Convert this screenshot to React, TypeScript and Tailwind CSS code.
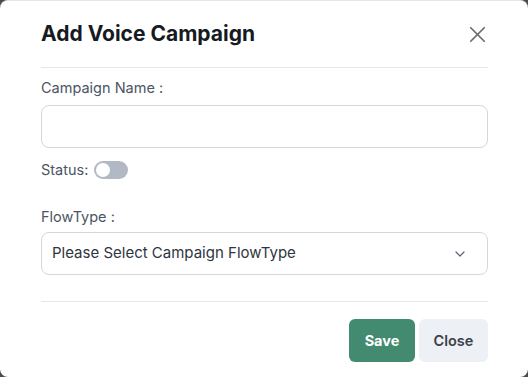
import { X, ChevronDown } from 'lucide-react';

export default function App() {
  return (
    <div className="h-[377px] w-[528px] bg-[#4b4b4b] font-['Inter',sans-serif]">
      <div className="flex h-full flex-col rounded-lg border-t border-[#e3e8f0] bg-white pl-[41px] pr-[40px]">
        <div className="flex items-center justify-between pt-[19px] pb-[19px]">
          <h2 className="text-[21px] font-bold leading-7 text-[#161a22]">Add Voice Campaign</h2>
          <button className="-mr-[3px] text-[#6b6b6b]">
            <X className="h-[27px] w-[27px]" strokeWidth={1.5} />
          </button>
        </div>
        <div className="h-px bg-[#e5e7eb]" />

        <label className="mt-[10px] text-[14.5px] leading-5 text-[#4b5563]">Campaign Name :</label>
        <input className="mt-[7px] h-[43px] w-full rounded-lg border border-[#d4d7dd] px-3 text-sm outline-none" />

        <div className="mt-[12px] flex items-center gap-[6px]">
          <span className="text-[14.5px] leading-5 text-[#4b5563]">Status:</span>
          <span className="flex h-[18px] w-[34px] items-center rounded-full bg-[#b3b9c4] px-[2px]">
            <span className="h-[14px] w-[14px] rounded-full bg-white" />
          </span>
        </div>

        <label className="mt-[27px] text-[14.5px] leading-5 text-[#4b5563]">FlowType :</label>
        <div className="mt-[5px] flex h-[43px] items-center justify-between rounded-lg border border-[#d4d7dd] pl-[10px] pr-[19px]">
          <span className="text-[15px] text-[#2f3540]">Please Select Campaign FlowType</span>
          <ChevronDown className="h-[16px] w-[16px] text-[#5b6270]" strokeWidth={1.8} />
        </div>

        <div className="mt-[26px] h-px bg-[#e5e7eb]" />

        <div className="mt-[17px] flex justify-end gap-[4px]">
          <button className="h-[43px] w-[66px] rounded-md bg-[#438b70] text-[14.5px] font-bold text-white">Save</button>
          <button className="h-[43px] w-[69px] rounded-md bg-[#edf0f5] text-[14.5px] font-semibold text-[#3a404c]">Close</button>
        </div>
      </div>
    </div>
  );
}
